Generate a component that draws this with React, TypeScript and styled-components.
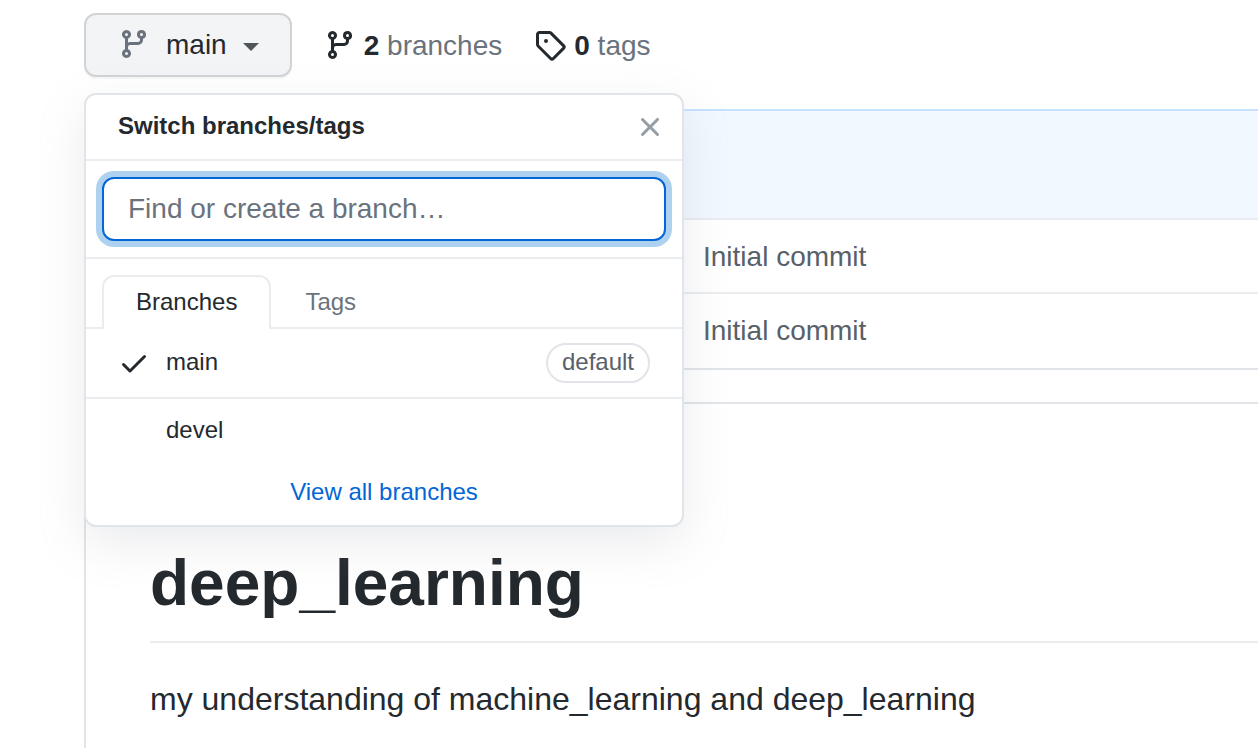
import React from "react";
import styled, { createGlobalStyle } from "styled-components";

const GlobalStyle = createGlobalStyle`
  * { box-sizing: border-box; }
  body {
    margin: 0;
    background: #fff;
    color: #24292e;
    font-family: "Liberation Sans", Arial, sans-serif;
    font-size: 28px;
    line-height: 42px;
  }
  button, input { font: inherit; color: inherit; }
  a { color: inherit; text-decoration: none; }
  h1, h2, p, ul { margin: 0; padding: 0; }
  ul { list-style: none; }
`;

const PATHS = {
  branch:
    "M11.75 2.5a.75.75 0 100 1.5.75.75 0 000-1.5zm-2.25.75a2.25 2.25 0 113 2.122V6A2.5 2.5 0 0110 8.5H6a1 1 0 00-1 1v1.128a2.251 2.251 0 11-1.5 0V5.372a2.25 2.25 0 111.5 0v1.836A2.492 2.492 0 016 7h4a1 1 0 001-1v-.628A2.25 2.25 0 019.5 3.25zM4.25 12a.75.75 0 100 1.5.75.75 0 000-1.5zM3.5 3.25a.75.75 0 111.5 0 .75.75 0 01-1.5 0z",
  tag: "M2.5 7.775V2.75a.25.25 0 01.25-.25h5.025a.25.25 0 01.177.073l6.25 6.25a.25.25 0 010 .354l-5.025 5.025a.25.25 0 01-.354 0l-6.25-6.25a.25.25 0 01-.073-.177zm-1.5 0V2.75C1 1.784 1.784 1 2.75 1h5.025c.464 0 .91.184 1.238.513l6.25 6.25a1.75 1.75 0 010 2.474l-5.026 5.026a1.75 1.75 0 01-2.474 0l-6.25-6.25A1.75 1.75 0 011 7.775zM6 5a1 1 0 100 2 1 1 0 000-2z",
  close:
    "M3.72 3.72a.75.75 0 011.06 0L8 6.94l3.22-3.22a.75.75 0 111.06 1.06L9.06 8l3.22 3.22a.75.75 0 11-1.06 1.06L8 9.06l-3.22 3.22a.75.75 0 01-1.06-1.06L6.94 8 3.72 4.78a.75.75 0 010-1.06z",
  check:
    "M13.78 4.22a.75.75 0 010 1.06l-7.25 7.25a.75.75 0 01-1.06 0L2.22 9.28a.75.75 0 011.06-1.06L6 10.94l6.72-6.72a.75.75 0 011.06 0z",
};

const Svg = styled.svg<{ $color: string }>`
  display: block;
  flex: none;
  width: 32px;
  height: 32px;
  fill: ${(p) => p.$color};
`;

function Icon({ name, color = "#24292e" }: { name: keyof typeof PATHS; color?: string }) {
  return (
    <Svg viewBox="0 0 16 16" $color={color} aria-hidden="true">
      <path fillRule="evenodd" d={PATHS[name]} />
    </Svg>
  );
}

const Page = styled.div`
  display: flex;
  flex-direction: column;
  min-height: 100vh;
  padding: 13px 0 0 84px;
  overflow: hidden;
`;

const Toolbar = styled.div`
  display: flex;
  align-items: center;
  gap: 32px;
`;

const ToolbarText = styled.span`
  padding-top: 2px;
`;

const BranchPicker = styled.div`
  position: relative;
`;

const PickerButton = styled.button`
  display: flex;
  align-items: center;
  gap: 16px;
  height: 64px;
  padding: 0 31px 2px 32px;
  border: 2px solid #d1d3d5;
  border-radius: 12px;
  background: #f3f4f6;
  box-shadow: 0 2px 0 rgba(27, 31, 35, 0.04);
  cursor: pointer;
`;

const Caret = styled.span`
  margin-top: 6px;
  border: 8px solid transparent;
  border-top-color: #50555a;
  border-bottom: 0;
`;

const Stat = styled.a`
  display: flex;
  align-items: center;
  gap: 8px;
  color: #6a737d;

  strong { color: #24292e; }
`;

const Menu = styled.div`
  position: absolute;
  top: calc(100% + 16px);
  left: 0;
  z-index: 1;
  width: 600px;
  border: 2px solid #e1e4e8;
  border-radius: 12px;
  background: #fff;
  box-shadow: 0 16px 48px rgba(149, 157, 165, 0.2);
  font-size: 24px;
  line-height: 34px;
`;

const MenuHeader = styled.div`
  display: flex;
  align-items: center;
  justify-content: space-between;
  padding: 14px 16px 14px 32px;
  border-bottom: 2px solid #eaecef;
`;

const MenuTitle = styled.h2`
  padding-bottom: 2px;
  font-size: 24px;
  line-height: 34px;
`;

const CloseButton = styled.button`
  padding: 0;
  border: 0;
  background: none;
  cursor: pointer;
`;

const SearchArea = styled.div`
  padding: 16px;
  border-bottom: 2px solid #eaecef;
`;

const SearchInput = styled.input`
  display: block;
  width: 100%;
  height: 64px;
  padding: 0 24px;
  border: 2px solid #0366d6;
  border-radius: 12px;
  outline: 0;
  background: #fff;
  box-shadow: 0 0 0 6px #aed1f0;
  font-size: 28px;

  &::placeholder { color: #6a737d; opacity: 1; }
`;

const TabList = styled.div`
  display: flex;
  padding: 16px 16px 0;
  border-bottom: 2px solid #eaecef;
`;

const Tab = styled.button<{ $active?: boolean }>`
  margin-bottom: -2px;
  padding: 8px 32px 10px;
  border: 2px solid ${(p) => (p.$active ? "#eaecef" : "transparent")};
  border-bottom: 0;
  border-radius: 12px 12px 0 0;
  background: ${(p) => (p.$active ? "#fff" : "transparent")};
  color: ${(p) => (p.$active ? "#24292e" : "#6a737d")};
  cursor: pointer;
`;

const BranchRow = styled.a<{ $checked?: boolean }>`
  display: flex;
  align-items: center;
  gap: 16px;
  padding: 14px 32px 14px ${(p) => (p.$checked ? 32 : 80)}px;
`;

const BranchName = styled.span`
  padding-bottom: 2px;
`;

const BranchItem = styled.li`
  & + & { border-top: 2px solid #eaecef; }
`;

const Label = styled.span`
  margin-left: auto;
  padding: 0 14px 2px;
  border: 2px solid #e1e4e8;
  border-radius: 20px;
  color: #586069;
`;

const ViewAll = styled.a`
  display: block;
  padding: 12px 16px 16px;
  color: #0366d6;
  text-align: center;
`;

const FileBox = styled.section`
  margin-top: 32px;
  border: 2px solid #e1e4e8;
  border-top-color: #c8e1ff;
  border-right: 0;
  border-radius: 12px 0 0 12px;
`;

const LatestCommit = styled.div`
  height: 107px;
  border-radius: 10px 0 0 0;
  background: #f1f8ff;
`;

const FileRow = styled.li`
  padding: 16px 32px 14px 617px;
  border-top: 2px solid #eaecef;
  color: #586069;

  &:last-child { padding-bottom: 16px; }
`;

const Readme = styled.article`
  flex: 1;
  margin-top: 32px;
  padding: 139px 0 24px 64px;
  border: 2px solid #e1e4e8;
  border-width: 2px 0 0 2px;
  border-radius: 12px 0 0 0;
  font-size: 32px;
  line-height: 48px;
`;

const Heading = styled.h1`
  margin-bottom: 32px;
  padding-bottom: 18px;
  border-bottom: 2px solid #eaecef;
  font-size: 64px;
  line-height: 80px;
`;

export default function App() {
  return (
    <>
      <GlobalStyle />
      <Page>
        <Toolbar>
          <BranchPicker>
            <PickerButton type="button" aria-expanded="true">
              <Icon name="branch" color="#6a737d" />
              <ToolbarText>main</ToolbarText>
              <Caret />
            </PickerButton>
            <Menu role="dialog" aria-labelledby="menu-title">
              <MenuHeader>
                <MenuTitle id="menu-title">Switch branches/tags</MenuTitle>
                <CloseButton type="button" aria-label="Close">
                  <Icon name="close" color="#959da5" />
                </CloseButton>
              </MenuHeader>
              <SearchArea>
                <SearchInput
                  type="text"
                  aria-label="Find or create a branch"
                  placeholder="Find or create a branch…"
                />
              </SearchArea>
              <TabList role="tablist">
                <Tab type="button" role="tab" aria-selected="true" $active>
                  Branches
                </Tab>
                <Tab type="button" role="tab" aria-selected="false">
                  Tags
                </Tab>
              </TabList>
              <ul>
                <BranchItem>
                  <BranchRow href="#main" $checked>
                    <Icon name="check" />
                    <BranchName>main</BranchName>
                    <Label>default</Label>
                  </BranchRow>
                </BranchItem>
                <BranchItem>
                  <BranchRow href="#devel">
                    <BranchName>devel</BranchName>
                  </BranchRow>
                </BranchItem>
              </ul>
              <ViewAll href="#branches">View all branches</ViewAll>
            </Menu>
          </BranchPicker>
          <Stat href="#branches">
            <Icon name="branch" />
            <ToolbarText>
              <strong>2</strong> branches
            </ToolbarText>
          </Stat>
          <Stat href="#tags">
            <Icon name="tag" />
            <ToolbarText>
              <strong>0</strong> tags
            </ToolbarText>
          </Stat>
        </Toolbar>

        <FileBox>
          <LatestCommit />
          <ul>
            <FileRow>
              <a href="#commit">Initial commit</a>
            </FileRow>
            <FileRow>
              <a href="#commit">Initial commit</a>
            </FileRow>
          </ul>
        </FileBox>

        <Readme>
          <Heading>deep_learning</Heading>
          <p>my understanding of machine_learning and deep_learning</p>
        </Readme>
      </Page>
    </>
  );
}
